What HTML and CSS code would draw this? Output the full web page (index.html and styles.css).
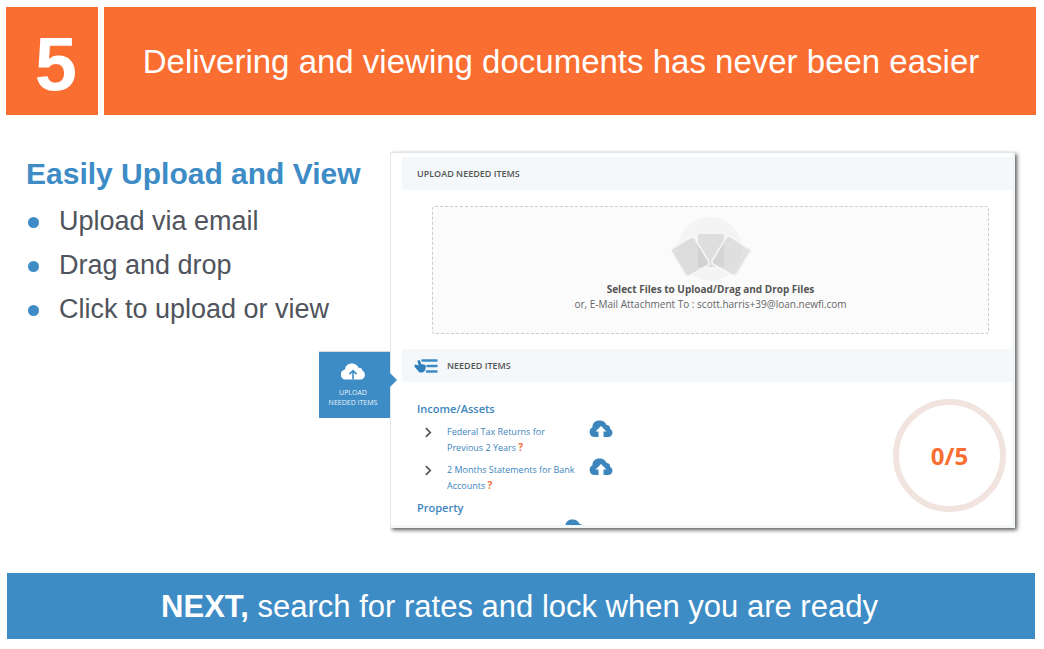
FILE: index.html
```html
<!DOCTYPE html>
<html lang="en">
<head>
<meta charset="utf-8">
<meta name="viewport" content="width=device-width, initial-scale=1">
<title>Delivering and viewing documents</title>
<link rel="stylesheet" href="styles.css">
</head>
<body>
<svg class="sprite" aria-hidden="true">
  <symbol id="cloud" viewBox="0 0 24 18">
    <path fill="currentColor" d="M5.500 17A5.200 5.200 0 0 1 3.400 7.200 C3.400 3 6.300 .5 10.500 .5 C14 .5 16.800 2.500 17.500 5 C19.800 4.800 21.400 6.500 21 8.800 C22.500 9.600 23.500 11 23.500 12.800 C23.500 15.300 21.500 17 19.300 17Z"/>
    <path fill="#fff" d="M12 6l5.500 5.500h-3v5.500H9.500v-5.500h-3z"/>
  </symbol>
</svg>
<header class="banner">
  <div class="step">5</div>
  <h1 class="title">Delivering and viewing documents has never been easier</h1>
</header>
<main class="content">
  <section class="intro">
    <h2 class="intro-heading">Easily Upload and View</h2>
    <ul class="features">
      <li>Upload via email</li>
      <li>Drag and drop</li>
      <li>Click to upload or view</li>
    </ul>
    <button class="tab" type="button">
      <svg class="tab-icon" viewBox="0 0 24 16" aria-hidden="true">
        <path fill="#fff" d="M5 15.500A4.800 4.800 0 0 1 4.500 6 C5 2.500 7.500.500 11 .500 C14 .500 16.300 2 17.200 4.500 C19.300 4.300 20.500 5.300 20.800 7 C22.300 7.800 23.200 9.300 23.200 11.200 C23.200 13.700 21.500 15.500 19 15.500Z"/>
        <path fill="none" stroke="#3d8cc6" stroke-width="1.500" d="M12 15.500V8M8.700 10.500L12 7.200l3.300 3.300"/>
      </svg>
      <span>UPLOAD<br>NEEDED ITEMS</span>
    </button>
  </section>
  <section class="panel">
    <h3 class="strip">UPLOAD NEEDED ITEMS</h3>
    <button class="dropzone" type="button">
      <svg class="cards" viewBox="0 0 84 66" aria-hidden="true">
        <circle cx="41" cy="33" r="32" fill="#f4f4f4"/>
        <rect x="29" y="18" width="26" height="33" rx="2" fill="#dedede"/>
        <g stroke="#f7f7f7" stroke-width="1.500">
          <path fill="#c4c4c4" fill-opacity=".5" d="M4 32 L21.500 21.500 Q24 20 25.500 22 L39.500 45 Q41 48 38.500 49.500 L20 60 Q17.500 61 16 58.500 L2.500 35.500 Q1.500 33.500 4 32Z"/>
          <path fill="#cacaca" fill-opacity=".5" d="M79 32 L61.500 20.500 Q59 19 57.500 21 L43.500 44 Q42 47 44.500 48.500 L64 59.500 Q66.500 60.500 68 58 L81.500 35.500 Q82.500 33.500 79 32Z"/>
        </g>
      </svg>
      <strong class="drop-title">Select Files to Upload/Drag and Drop Files</strong>
      <span class="drop-note">or, E-Mail Attachment To : scott.harris+39@loan.newfi.com</span>
    </button>
    <h3 class="strip">
      <svg class="list-icon" viewBox="0 0 24 16" aria-hidden="true">
        <path stroke="#3d8cc6" stroke-width="2.500" stroke-linecap="round" d="M8.500 2.500H22.500M13.500 8H22.500M13 13.500h9.500"/>
        <path fill="#2f80bd" d="M3.500 3Q4.800 1.200 6.200 3L7.400 6.200l2.800.3q1.900.5 1.700 2.400l-.8 3.500-2.400 2H5.500L1 9.200Q-.5 7.200 1.500 6.500l3.200 1z"/>
      </svg>
      NEEDED ITEMS
    </h3>
    <div class="needed">
      <div class="groups">
        <h4 class="group-title">Income/Assets</h4>
        <ul class="items">
          <li class="item">
            <svg class="chevron" viewBox="0 0 8 12" aria-hidden="true"><path d="M1 1l5 5-5 5"/></svg>
            <span class="item-name"><a href="#">Federal Tax Returns for Previous 2 Years</a> <b>?</b></span>
            <button class="upload" type="button" aria-label="Upload tax returns"><svg><use href="#cloud"/></svg></button>
          </li>
          <li class="item">
            <svg class="chevron" viewBox="0 0 8 12" aria-hidden="true"><path d="M1 1l5 5-5 5"/></svg>
            <span class="item-name"><a href="#">2 Months Statements for Bank Accounts</a> <b>?</b></span>
            <button class="upload" type="button" aria-label="Upload bank statements"><svg><use href="#cloud"/></svg></button>
          </li>
        </ul>
        <h4 class="group-title">Property</h4>
        <div class="cut-row"><button class="upload" type="button" aria-label="Upload property items"><svg><use href="#cloud"/></svg></button></div>
      </div>
      <div class="progress">0/5</div>
    </div>
  </section>
</main>
<footer class="next"><p><strong>NEXT,</strong> search for rates and lock when you are ready</p></footer>
</body>
</html>
```

FILE: styles.css
```css
* { box-sizing: border-box; }
body {
  margin: 0;
  padding: 7px 8px 10px 6px;
  background: #fff;
  font-family: "Liberation Sans", Arial, sans-serif;
}
h1, h2, h3, h4, p, ul { margin: 0; padding: 0; }
ul { list-style: none; }
button { border: 0; padding: 0; background: none; font-family: inherit; cursor: pointer; }
.sprite { display: none; }

.banner { display: grid; grid-template-columns: 92px 1fr; gap: 6px; color: #fff; }
.step, .title {
  display: flex;
  align-items: center;
  justify-content: center;
  background: #fa6e31;
}
.step { padding: 7px 0 1px 8px; font-size: 76px; line-height: 100px; font-weight: 700; }
.title { padding: 2px 18px 0 0; font-size: 33px; font-weight: 400; }

.content { display: grid; grid-template-columns: 384px 1fr; padding: 37px 21px 45px 0; }

.intro { display: flex; flex-direction: column; }
.intro-heading { padding-left: 20px; color: #3d8cc6; font-size: 30px; line-height: 44px; }
.features { padding: 3px 0 20px 22px; color: #50545c; font-size: 27px; line-height: 44px; }
.features li { display: flex; align-items: center; gap: 20px; }
.features li::before {
  content: "";
  width: 11px;
  height: 11px;
  margin-top: 2px;
  border-radius: 50%;
  background: #3d8cc6;
}
.tab {
  position: relative;
  z-index: 1;
  align-self: flex-end;
  display: flex;
  flex-direction: column;
  align-items: center;
  gap: 8px;
  width: 71px;
  padding: 11px 3px 10px 0;
  border-top: 1px solid #d8dde0;
  background: #3d8cc6;
  color: #e8f3fb;
  font: 7px/10px "Open Sans", sans-serif;
  white-space: nowrap;
}
.tab::after {
  content: "";
  position: absolute;
  top: 21px;
  left: 100%;
  border: 7px solid transparent;
  border-left-color: #3d8cc6;
  border-right: 0;
}
.tab-icon { width: 26px; height: 17px; }

.panel {
  display: flex;
  flex-direction: column;
  padding: 4px 3px 3px 11px;
  border-left: 1px solid #e3e6e8;
  border-top: 1px solid #e3e6e6;
  background: #fff;
  box-shadow: inset -3px -3px #f2f6f7, 2px 2px 4px rgba(0, 0, 0, .65);
  clip-path: inset(-3px -9px -9px 0);
  color: #555;
  font-family: "Open Sans", sans-serif;
}
.strip {
  display: flex;
  align-items: center;
  gap: 9px;
  height: 33px;
  padding-left: 15px;
  background: #f4f8fb;
  font-size: 9px;
  font-weight: 600;
}
.list-icon { width: 24px; height: 16px; margin-left: -3px; }
.dropzone {
  display: flex;
  flex-direction: column;
  align-items: center;
  margin: 16px 23px 15px 30px;
  padding: 9px 0 21px;
  border: 1px dashed #ccc;
  border-radius: 3px;
  background: #fbfbfb;
  color: #666;
}
.cards { width: 84px; height: 66px; }
.drop-title { font-size: 10px; line-height: 15px; color: #555; }
.drop-note { font-size: 10px; line-height: 15px; }

.needed { display: flex; justify-content: space-between; padding: 17px 6px 0 15px; }
.group-title { color: #3d85bd; font-size: 11px; line-height: 20px; font-weight: 600; }
.items { padding: 5px 0 0; }
.item {
  display: grid;
  grid-template-columns: 14px 134px 24px;
  column-gap: 8px;
  align-items: start;
  padding-left: 8px;
  margin-bottom: 6px;
  font-size: 9px;
  line-height: 16px;
}
.item:last-child { margin-bottom: 4px; }
.item a { color: #3d85bd; text-decoration: none; }
.item b { color: #fa6e31; font-size: 10px; line-height: 12px; }
.chevron { width: 7px; height: 11px; margin-top: 3px; fill: none; stroke: #555; stroke-width: 2; }
.upload { display: block; width: 24px; height: 18px; color: #3d85bd; }
.item .upload { margin-top: -4px; }
.upload svg { display: block; width: 24px; height: 18px; }
.cut-row { height: 7px; padding: 1px 0 0 145px; overflow: hidden; }
.progress {
  display: flex;
  align-items: center;
  justify-content: center;
  width: 113px;
  height: 113px;
  border: 6px solid #f1e4df;
  border-radius: 50%;
  color: #fa6e31;
  font-size: 24px;
  font-weight: 700;
}

.next {
  margin: 0 1px;
  padding: 14px 3px 12px 0;
  background: #3d8cc6;
  color: #fff;
  font-size: 31px;
  line-height: 40px;
  text-align: center;
}
```
